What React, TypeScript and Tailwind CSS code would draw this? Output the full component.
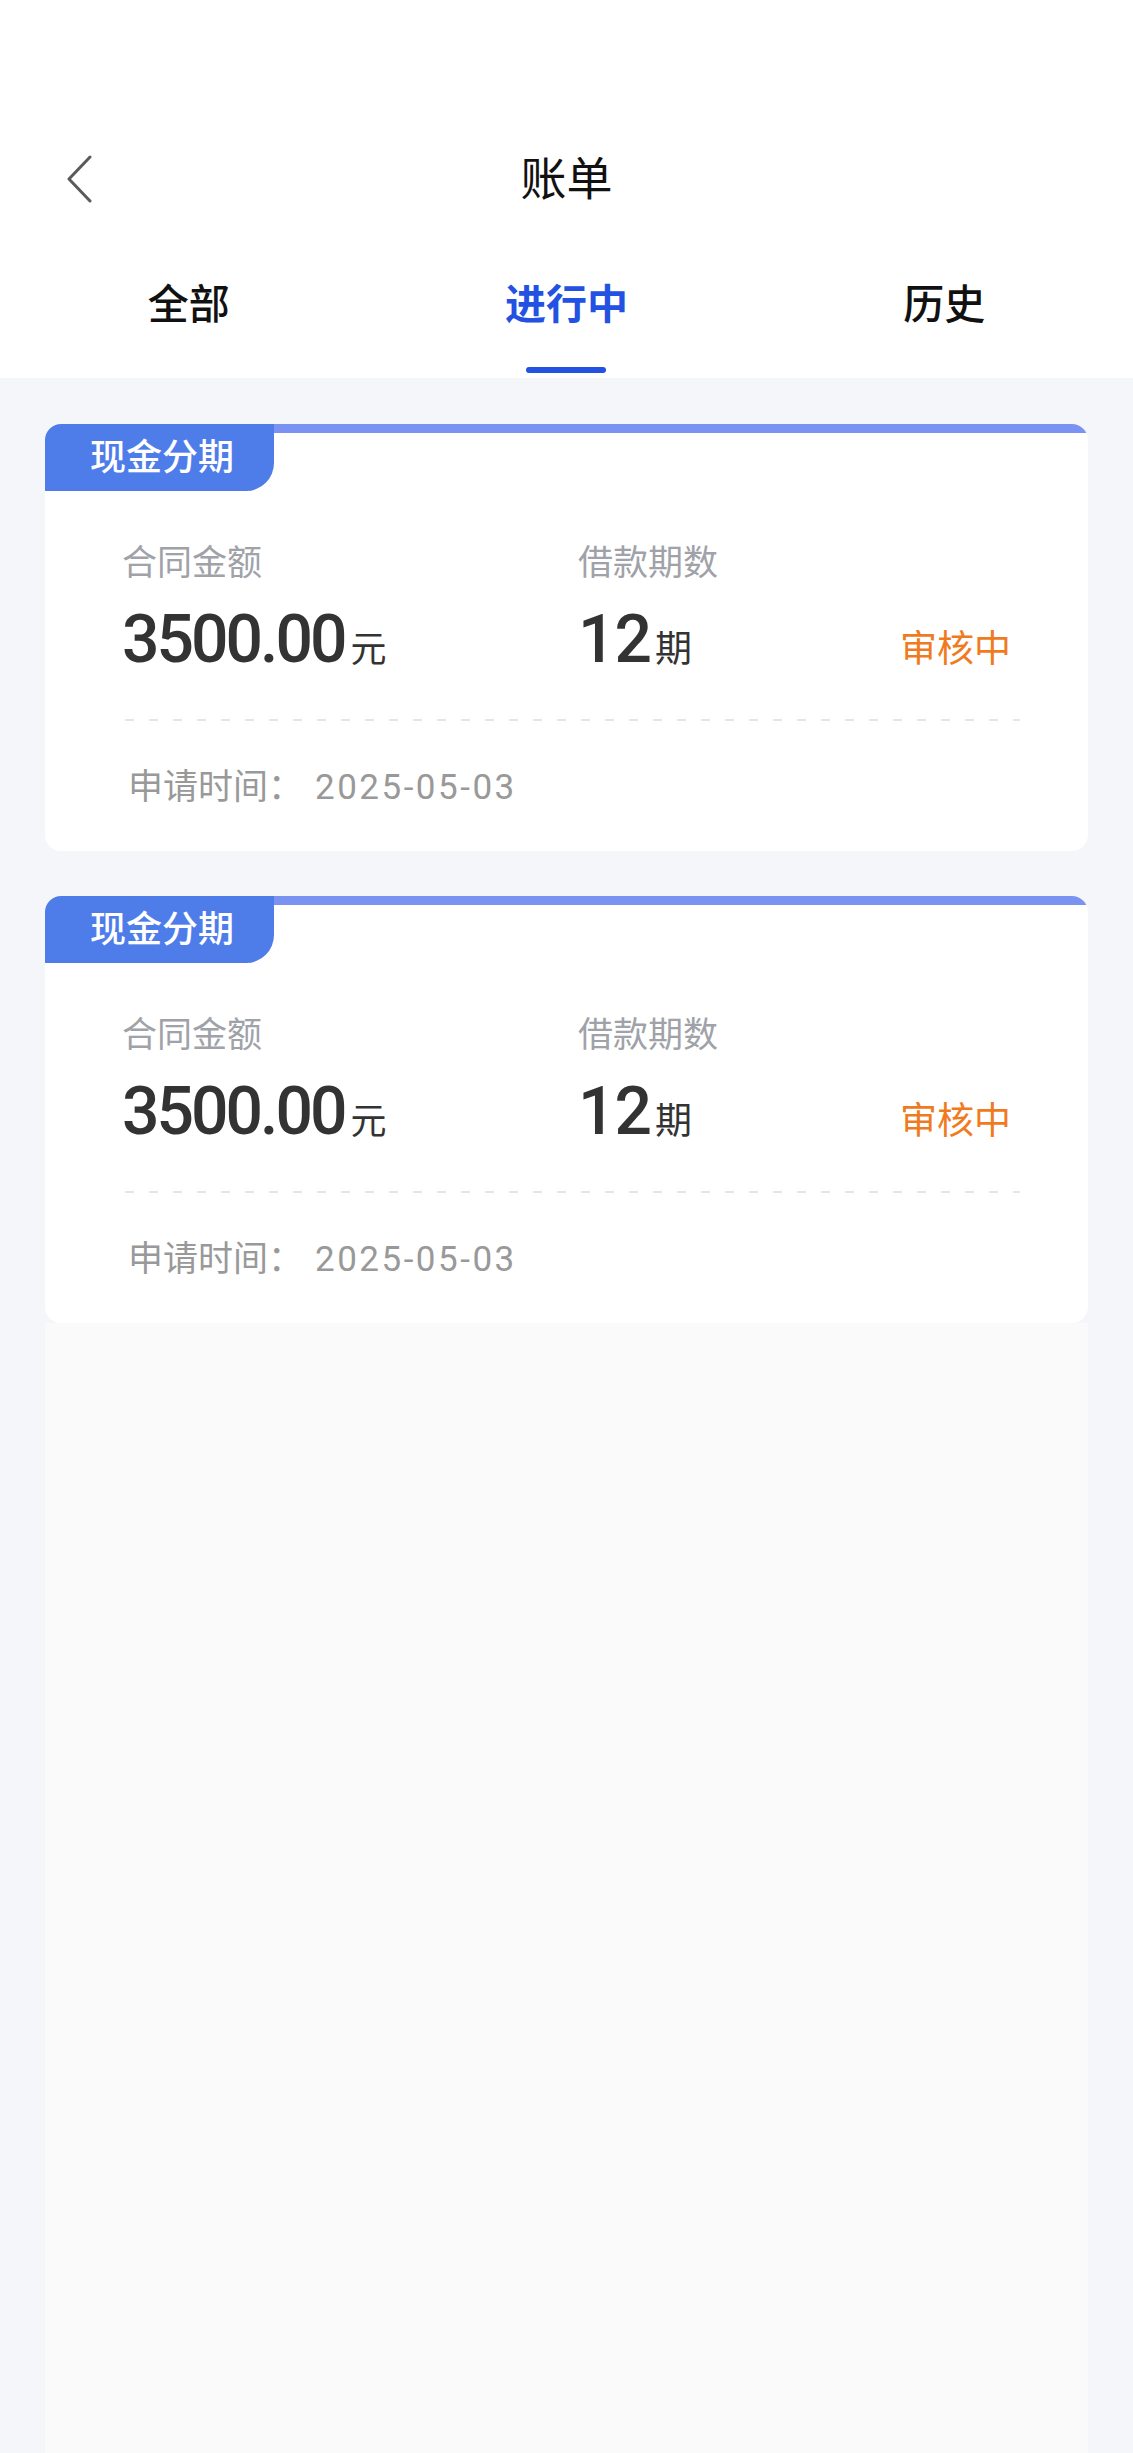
import React from "react";

const bills = [
  { id: 1, type: "现金分期", amount: "3500.00", terms: 12, status: "审核中", date: "2025-05-03" },
  { id: 2, type: "现金分期", amount: "3500.00", terms: 12, status: "审核中", date: "2025-05-03" },
];

const tabs = ["全部", "进行中", "历史"];

export default function App() {
  return (
    <div className="flex min-h-[2453px] flex-col bg-[#f5f6fa] font-['Roboto','Noto_Sans_CJK_SC',sans-serif]">
      <Header active={1} />
      <main className="flex flex-1 flex-col gap-[45px] px-[45px] pt-[46px]">
        {bills.map((b) => (
          <BillCard key={b.id} bill={b} />
        ))}
        <div className="-mt-[45px] flex-1 bg-[#fafafa]" />
      </main>
    </div>
  );
}

function Header({ active }: { active: number }) {
  return (
    <header className="bg-white pt-[130px]">
      <div className="grid h-[98px] grid-cols-[1fr_auto_1fr] items-center">
        <div className="pl-[66px]">
          <svg width="26" height="48" viewBox="0 0 26 48" fill="none">
            <polyline points="24,2 3,24 24,46" stroke="#5a5a5a" strokeWidth="3" strokeLinecap="round" strokeLinejoin="round" />
          </svg>
        </div>
        <h1 className="text-[46px] leading-[56px] text-[#111]">账单</h1>
        <div />
      </div>
      <nav className="grid h-[150px] grid-cols-3">
        {tabs.map((t, i) => (
          <div key={t} className="flex flex-col items-center pt-[53px]">
            <span
              className={
                i === active
                  ? "text-[41px] leading-[48px] font-bold text-[#2352e3]"
                  : "text-[41px] leading-[48px] font-medium text-[#111]"
              }
            >
              {t}
            </span>
            {i === active && <div className="mt-[38px] h-[6px] w-[80px] rounded-full bg-[#2352e3]" />}
          </div>
        ))}
      </nav>
    </header>
  );
}

type Bill = (typeof bills)[number];

function BillCard({ bill }: { bill: Bill }) {
  return (
    <div className="overflow-hidden rounded-[16px] bg-white">
      <div className="flex">
        <div className="flex h-[67px] w-[229px] items-center justify-center rounded-br-[28px] bg-[#4e7de9] pl-[5px] text-[36px] font-medium text-white">
          {bill.type}
        </div>
        <div className="h-[9px] flex-1 bg-[#7a93f2]" />
      </div>

      <div className="px-[77px] pt-[52px] pb-[42px]">
        <div className="grid grid-cols-[456px_1fr_auto] items-baseline gap-y-[22px]">
          <span className="text-[35px] leading-[42px] text-[#9fa2a8]">合同金额</span>
          <span className="text-[35px] leading-[42px] text-[#9fa2a8]">借款期数</span>
          <span />

          <span className="text-[66px] leading-[66px] font-medium tracking-[-3px] text-[#333]">
            {bill.amount}
            <span className="ml-[6px] text-[36px] leading-none font-normal tracking-normal">元</span>
          </span>
          <span className="text-[66px] leading-[66px] font-medium tracking-[-1px] text-[#333]">
            {bill.terms}
            <span className="ml-[4px] text-[37px] leading-none font-normal tracking-normal">期</span>
          </span>
          <span className="text-[37px] leading-none text-[#f07b1f]">{bill.status}</span>
        </div>

        <div className="mx-[3px] mt-[46px] h-[2px] w-[895px] bg-[linear-gradient(to_right,#e6e6e6_0,#e6e6e6_9px,transparent_9px)] bg-[length:24px_2px]" />

        <div className="mt-[46px] flex pl-[6px] text-[35px] leading-[42px] text-[#999]">
          <span>申请时间：</span>
          <span className="ml-[12px] tracking-[2.5px]">{bill.date}</span>
        </div>
      </div>
    </div>
  );
}
